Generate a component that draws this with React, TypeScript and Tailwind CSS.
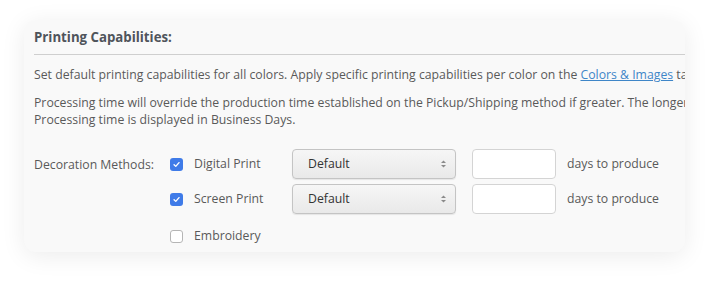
import React from "react";

function Check({ checked }: { checked: boolean }) {
  if (checked) {
    return (
      <span className="flex h-[13px] w-[13px] items-center justify-center rounded-[3px] bg-[#3f7be8]">
        <svg width="9" height="9" viewBox="0 0 10 10">
          <path d="M2.3 5.2 L4.2 7.1 L7.8 2.9" fill="none" stroke="white" strokeWidth="1.5" strokeLinecap="round" strokeLinejoin="round" />
        </svg>
      </span>
    );
  }
  return <span className="h-[13px] w-[13px] rounded-[3px] border border-[#b5b5b5] bg-white" />;
}

function Select() {
  return (
    <div className="flex h-[30px] w-[164px] items-center justify-between rounded-[4px] border border-[#c4c4c4] bg-gradient-to-b from-[#f6f6f6] to-[#e9e9e9] pl-[15px] pr-[8px] text-[#333] shadow-[0_1px_1px_rgba(0,0,0,0.08)]">
      <span>Default</span>
      <svg width="7" height="10" viewBox="0 0 7 10">
        <path d="M1 4 L3.5 1.5 L6 4 Z" fill="#8a8a8a" />
        <path d="M1 6 L3.5 8.5 L6 6 Z" fill="#8a8a8a" />
      </svg>
    </div>
  );
}

function Row({ label, checked, select }: { label: string; checked: boolean; select: boolean }) {
  return (
    <div className="flex h-[30px] items-center">
      <Check checked={checked} />
      <span className="ml-[11px] w-[98px]">{label}</span>
      {select && (
        <>
          <Select />
          <div className="ml-[16px] h-[30px] w-[84px] rounded-[4px] border border-[#d4d4d4] bg-white" />
          <span className="ml-[11px]">days to produce</span>
        </>
      )}
    </div>
  );
}

export default function App() {
  return (
    <div className="h-[281px] w-[709px] bg-white pl-[24px] pt-[20px]" style={{ fontFamily: '"Open Sans", sans-serif' }}>
      <div className="h-[232px] w-[661px] overflow-hidden rounded-[12px] bg-[#f9f9f9] pl-[10px] text-[12.25px] text-[#595959] shadow-[0_4px_24px_rgba(0,0,0,0.08)]">
        <div className="whitespace-nowrap">
          <div className="pt-[9px] pb-[8px] text-[13.25px] font-bold leading-[17px] text-[#4f545b]">Printing Capabilities:</div>
          <div className="h-px bg-[#cfcfcf]" />
          <div className="mt-[11px] leading-[17px]">
            Set default printing capabilities for all colors. Apply specific printing capabilities per color on the{" "}
            <span className="text-[#3f86c8] underline">Colors &amp; Images</span> tab.
          </div>
          <div className="mt-[11px] leading-[17px]">
            Processing time will override the production time established on the Pickup/Shipping method if greater. The longer
            <br />
            Processing time is displayed in Business Days.
          </div>
        </div>
        <div className="mt-[21px] flex">
          <div className="w-[136px] pt-[7px] leading-[17px]">Decoration Methods:</div>
          <div className="flex flex-col">
            <Row label="Digital Print" checked select />
            <div className="h-[5px]" />
            <Row label="Screen Print" checked select />
            <div className="h-[7px]" />
            <Row label="Embroidery" checked={false} select={false} />
          </div>
        </div>
      </div>
    </div>
  );
}
